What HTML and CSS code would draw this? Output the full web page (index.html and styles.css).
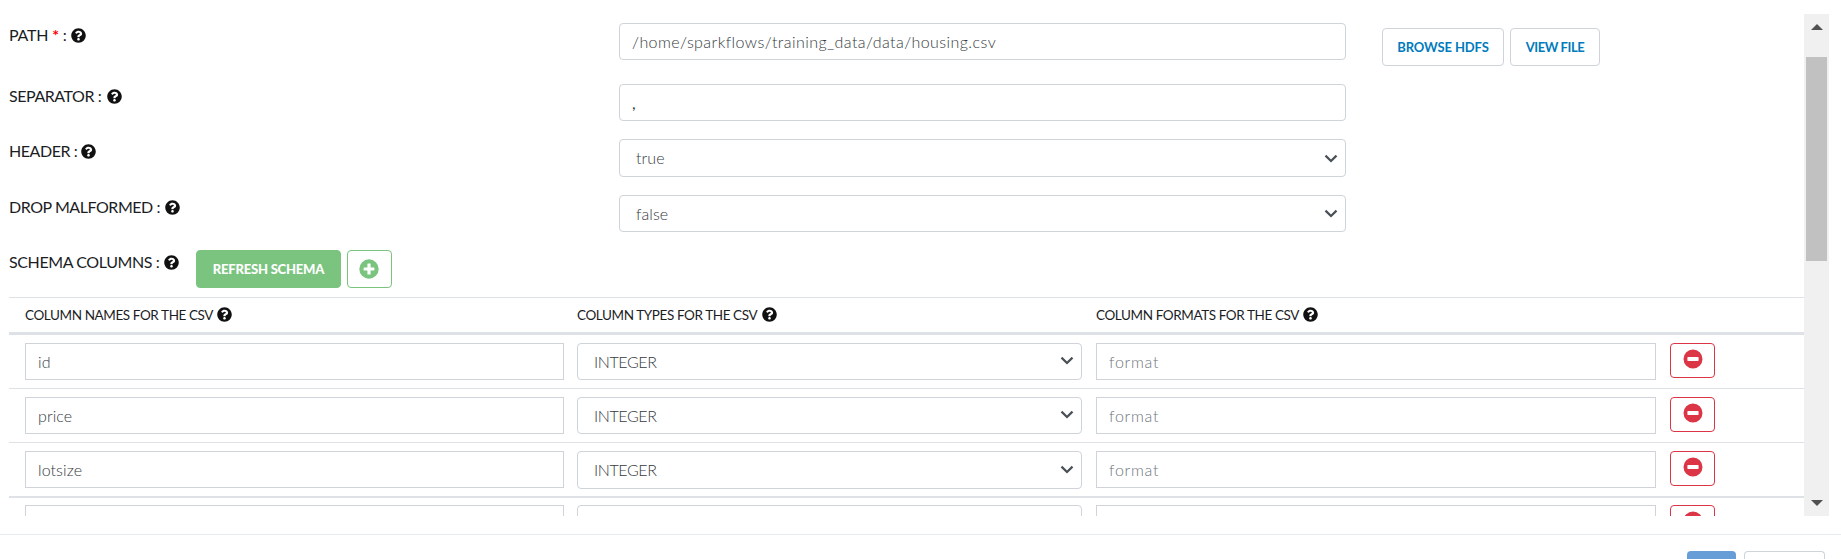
FILE: index.html
```html
<!DOCTYPE html>
<html lang="en">
<head>
<meta charset="utf-8">
<title>Dataset</title>
<link rel="stylesheet" href="styles.css">
</head>
<body>
<svg class="defs" width="0" height="0" aria-hidden="true">
  <symbol id="help" viewBox="0 0 512 512"><path d="M504 256c0 137-111 248-248 248S8 393 8 256 119 8 256 8s248 111 248 248zM262.700 90c-54.500 0-89.300 23-116.500 63.800-3.500 5.300-2.400 12.400 2.700 16.300l34.700 26.300c5.200 3.900 12.600 3 16.700-2.100 17.900-22.700 30.100-35.800 57.300-35.800 20.400 0 45.700 13.100 45.700 33 0 15-12.400 22.700-32.500 34C247.100 238.500 216 254.900 216 296v4c0 6.600 5.400 12 12 12h56c6.600 0 12-5.400 12-12v-1.300c0-28.500 83.200-29.600 83.200-106.700 0-58-60.200-102-116.500-102zM256 338c-25.400 0-46 20.600-46 46s20.600 46 46 46 46-20.600 46-46-20.600-46-46-46z"/></symbol>
  <symbol id="chev" viewBox="0 0 14 9"><path d="M1.500 1.600L7 7l5.500-5.400" fill="none" stroke="#495057" stroke-width="2.200"/></symbol>
  <symbol id="minus" viewBox="0 0 20 20"><path fill-rule="evenodd" d="M10 .5a9.500 9.500 0 1 0 0 19a9.500 9.500 0 0 0 0-19zM5 8.100h10q.6 0 .6.600v2.600q0 .6-.6.600H5q-.6 0-.6-.6V8.700q0-.6.6-.6z"/></symbol>
  <symbol id="plus" viewBox="0 0 20 20"><path fill-rule="evenodd" d="M10 .3a9.700 9.700 0 1 0 0 19.400a9.700 9.700 0 0 0 0-19.400zM8.900 4.600h2.200q.5 0 .5.500v3.300h3.300q.5 0 .5.500v2.200q0 .5-.5.500h-3.300v3.300q0 .5-.5.500H8.900q-.5 0-.5-.5v-3.300H5.100q-.5 0-.5-.5V8.900q0-.5.500-.5h3.300V5.100q0-.5.5-.5z"/></symbol>
</svg>
<main class="panel">
  <div class="content">
    <div class="field field-path">
      <div class="label"><span class="l-path">PATH <b class="req">*</b> :</span><svg class="help"><use href="#help"/></svg></div>
      <div class="control"><span class="t-path">/home/sparkflows/training_data/data/housing.csv</span></div>
      <div class="actions"><button class="btn browse">BROWSE HDFS</button><button class="btn view">VIEW FILE</button></div>
    </div>
    <div class="field field-sep">
      <div class="label"><span class="l-sep">SEPARATOR :</span><svg class="help"><use href="#help"/></svg></div>
      <div class="control"><span class="t-comma">,</span></div>
    </div>
    <div class="field field-header">
      <div class="label"><span class="l-header">HEADER :</span><svg class="help"><use href="#help"/></svg></div>
      <div class="control select tall"><span>true</span><svg class="chev"><use href="#chev"/></svg></div>
    </div>
    <div class="field field-drop">
      <div class="label"><span class="l-drop">DROP MALFORMED :</span><svg class="help"><use href="#help"/></svg></div>
      <div class="control select"><span>false</span><svg class="chev"><use href="#chev"/></svg></div>
    </div>
    <div class="schema">
      <div class="label"><span class="l-schema">SCHEMA COLUMNS :</span><svg class="help"><use href="#help"/></svg></div>
      <button class="btn refresh">REFRESH SCHEMA</button>
      <button class="btn add"><svg class="round"><use href="#plus"/></svg></button>
    </div>
    <div class="thead">
      <div class="th"><span class="h-names">COLUMN NAMES FOR THE CSV</span><svg class="help"><use href="#help"/></svg></div>
      <div class="th"><span class="h-types">COLUMN TYPES FOR THE CSV</span><svg class="help"><use href="#help"/></svg></div>
      <div class="th"><span class="h-formats">COLUMN FORMATS FOR THE CSV</span><svg class="help"><use href="#help"/></svg></div>
    </div>
    <div class="row">
      <div class="control square"><span>id</span></div>
      <div class="control select"><span class="t-int">INTEGER</span><svg class="chev"><use href="#chev"/></svg></div>
      <div class="control square hint"><span>format</span></div>
      <button class="btn remove"><svg class="round"><use href="#minus"/></svg></button>
    </div>
    <div class="row">
      <div class="control square"><span>price</span></div>
      <div class="control select"><span class="t-int">INTEGER</span><svg class="chev"><use href="#chev"/></svg></div>
      <div class="control square hint"><span>format</span></div>
      <button class="btn remove"><svg class="round"><use href="#minus"/></svg></button>
    </div>
    <div class="row">
      <div class="control square"><span>lotsize</span></div>
      <div class="control select tall"><span class="t-int">INTEGER</span><svg class="chev"><use href="#chev"/></svg></div>
      <div class="control square hint"><span>format</span></div>
      <button class="btn remove"><svg class="round"><use href="#minus"/></svg></button>
    </div>
    <div class="row divided">
      <div class="control square"></div>
      <div class="control select"></div>
      <div class="control square hint"></div>
      <button class="btn remove"><svg class="round"><use href="#minus"/></svg></button>
    </div>
  </div>
  <div class="scrollbar">
    <svg class="arrow" viewBox="0 0 12 6"><path d="M0 6L6 0l6 6z"/></svg>
    <div class="thumb"></div>
    <svg class="arrow down" viewBox="0 0 12 6"><path d="M0 0h12L6 6z"/></svg>
  </div>
</main>
<footer class="footer"><div class="ok"></div><div class="cancel"></div></footer>
</body>
</html>
```
FILE: styles.css
```css
* { box-sizing: border-box; }
body { margin: 0; padding-top: 14px; height: 559px; overflow: hidden; background: #fff; color: #212529; font: 16px/24px Lato, "Open Sans", sans-serif; }
svg { display: block; flex: none; }
.defs { position: absolute; }
.panel { display: flex; height: 502px; margin: 0 12px 0 9px; overflow: hidden; }
.content { flex: 1; min-width: 0; }
.field { display: grid; grid-template-columns: 610px 727px 1fr; align-items: start; }
.field-path { height: 70px; padding-top: 9px; }
.field-sep { height: 55px; }
.field-header { height: 56px; }
.field-drop { height: 55px; }
.label { display: flex; align-items: center; height: 24px; color: #1b1d1f; white-space: nowrap; }
.label span { flex: none; }
.help { width: 15px; height: 15px; fill: #111; }
.l-path { width: 62px; letter-spacing: -.2px; }
.l-sep { width: 98px; letter-spacing: -.45px; }
.l-header { width: 72px; letter-spacing: -.45px; }
.l-drop { width: 156px; letter-spacing: -.45px; }
.l-schema { width: 155px; letter-spacing: -.4px; }
.req { color: #f00; }
.control { display: flex; align-items: center; justify-content: space-between; height: 37px; padding: 0 7px 0 12px; border: 1px solid #ced4da; border-radius: 4px; color: #343a40; font-weight: 300; letter-spacing: .1px; white-space: nowrap; }
.t-path { letter-spacing: .43px; padding-top: 1px; }
.t-comma { font-weight: 400; }
.t-int { letter-spacing: -.4px; }
.tall { height: 38px; }
.select { padding-left: 16px; }
.square { border-radius: 0; }
.hint { color: #6c757d; letter-spacing: .75px; }
.chev { width: 14px; height: 9px; }
.row .chev { margin-top: -2px; }
.actions { display: flex; gap: 6px; padding: 5px 0 0 36px; }
.btn { display: flex; align-items: center; justify-content: center; height: 38px; padding: 0 0 1px; border: 1px solid #ced4da; border-radius: 4px; background: #fff; color: #007bbd; font: 700 13px/20px Lato, sans-serif; white-space: nowrap; }
.browse { width: 122px; letter-spacing: -.1px; }
.view { width: 90px; letter-spacing: -.45px; }
.schema { display: flex; height: 47px; }
.schema .refresh { width: 145px; margin-left: 17px; border-color: #7ac47f; background: #7ac47f; color: #fff; font-weight: 900; letter-spacing: -.2px; padding: 0; }
.schema .add { width: 45px; margin-left: 6px; border-color: #7ac47f; padding: 0 1px 1px 0; }
.round { width: 20px; height: 20px; }
.add .round { fill: #7ac47f; }
.remove .round { fill: #dc3545; margin-bottom: 2px; }
.thead, .row { display: grid; grid-template-columns: 539px 506px 561px 45px; column-gap: 13px; padding-left: 16px; border-top: 1px solid #dee2e6; }
.thead { height: 38px; border-bottom: 3px solid #dee2e6; }
.th { display: flex; height: 34px; align-items: center; font-size: 13.500px; letter-spacing: -.4px; color: #1b1d1f; white-space: nowrap; }
.th .help { margin-bottom: 2px; }
.h-names { width: 192px; }
.h-types { width: 185px; }
.h-formats { width: 207px; }
.row { height: 54px; padding-top: 8px; align-items: start; }
.row .select { width: 505px; }
.row .hint { width: 560px; }
.thead + .row { height: 53px; border-top: 0; }
.row.divided { border-top-width: 2px; padding-top: 7px; }
.remove { height: 35px; width: 45px; border-color: #dc3545; }
.scrollbar { display: flex; flex-direction: column; align-items: center; width: 25px; background: #f0f0f0; }
.arrow { width: 12px; height: 6px; margin-top: 10px; fill: #505050; }
.thumb { width: 21px; height: 204px; margin-top: 27px; background: #c1c1c1; }
.down { margin: auto 0 10px; }
.footer { display: flex; justify-content: flex-end; height: 25px; margin-top: 18px; padding: 16px 16px 0 0; border-top: 1px solid #e9ecef; gap: 8px; overflow: hidden; }
.ok { width: 49px; height: 8px; border-radius: 4px 4px 0 0; background: #689ed8; }
.cancel { width: 81px; height: 8px; border: 1px solid #ced4da; border-bottom: 0; border-radius: 4px 4px 0 0; }
```
